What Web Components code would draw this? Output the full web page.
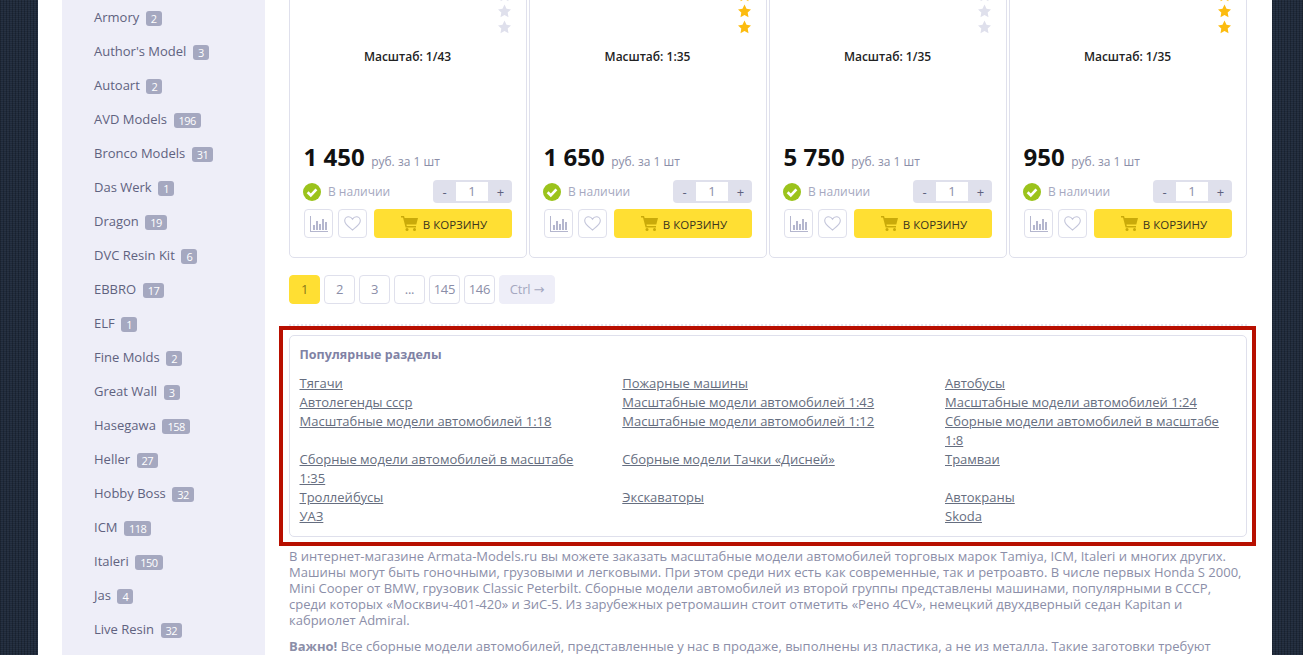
<!DOCTYPE html>
<html lang="ru">
<head>
<meta charset="utf-8">
<title>Armata Models</title>
<style>
  html, body { margin: 0; height: 655px; overflow: hidden; }
  body {
    font-family: "Open Sans", "Liberation Sans", sans-serif;
    background-color: #1f2a3b;
    background-image:
      repeating-linear-gradient(90deg, rgba(0,0,0,.22) 0 1px, transparent 1px 3px),
      repeating-linear-gradient(0deg, rgba(255,255,255,.035) 0 1px, transparent 1px 2px);
  }
  .page { display: flex; width: 1234px; height: 655px; margin-left: 38px; background: #fff; }
</style>
</head>
<body>
<div class="page">
  <brand-sidebar></brand-sidebar>
  <main-column></main-column>
</div>

<script>
const brands = [
  ['Armory', 2], ["Author's Model", 3], ['Autoart', 2], ['AVD Models', 196], ['Bronco Models', 31],
  ['Das Werk', 1], ['Dragon', 19], ['DVC Resin Kit', 6], ['EBBRO', 17], ['ELF', 1], ['Fine Molds', 2],
  ['Great Wall', 3], ['Hasegawa', 158], ['Heller', 27], ['Hobby Boss', 32], ['ICM', 118],
  ['Italeri', 150], ['Jas', 4], ['Live Resin', 32],
];

const products = [
  { scale: '1/43', price: '1 450', stars: false },
  { scale: '1:35', price: '1 650', stars: true },
  { scale: '1/35', price: '5 750', stars: false },
  { scale: '1/35', price: '950', stars: true },
];

const popular = [
  'Тягачи', 'Пожарные машины', 'Автобусы',
  'Автолегенды ссср', 'Масштабные модели автомобилей 1:43', 'Масштабные модели автомобилей 1:24',
  'Масштабные модели автомобилей 1:18', 'Масштабные модели автомобилей 1:12', 'Сборные модели автомобилей в масштабе 1:8',
  'Сборные модели автомобилей в масштабе 1:35', 'Сборные модели Тачки «Дисней»', 'Трамваи',
  'Троллейбусы', 'Экскаваторы', 'Автокраны',
  'УАЗ', '', 'Skoda',
];

const starPath = 'M6.5 .5l2 4.3 4.5.6-3.3 3.2.8 4.7-4-2.3-4 2.3.8-4.7L0 5.400l4.5-.6z';

class BrandSidebar extends HTMLElement {
  constructor() {
    super();
    this.attachShadow({ mode: 'open' });
    this.shadowRoot.innerHTML = `
      <style>
        :host { display: block; flex: none; width: 203px; margin-left: 24px; background: #eeeef8; overflow: hidden; }
        ul { list-style: none; margin: 0; padding: 0 0 0 32px; }
        li { display: flex; align-items: center; height: 34px; font-size: 13px; color: #5f627f; white-space: nowrap; }
        span {
          margin-left: 6.5px; min-width: 6px; height: 15px; padding: 0 5px; margin-top: 2px;
          border-radius: 3px; background: #a5a8c0; color: #fff;
          font-size: 11px; letter-spacing: -.5px; line-height: 15px; text-align: center;
        }
      </style>
      <ul>
        ${brands.map(b => `<li>${b[0]}<span>${b[1]}</span></li>`).join('')}
      </ul>
    `;
  }
}

class ProductCard extends HTMLElement {
  static get observedAttributes() {
    return ['data-scale', 'data-price', 'data-stars'];
  }

  attributeChangedCallback() {
    this.render();
  }

  constructor() {
    super();
    this.attachShadow({ mode: 'open' });
  }

  render() {
    const starColor = this.dataset.stars === 'on' ? '#fcbc10' : '#dfe0ec';
    const star = `<svg width="13" height="14" viewBox="0 0 13 14"><path fill="${starColor}" d="${starPath}"/></svg>`;
    this.shadowRoot.innerHTML = `
      <style>
        :host {
          display: flex; flex-direction: column; box-sizing: border-box; height: 272px;
          padding: 1px 14px 19px; border: 1px solid #dfe0ec; border-radius: 5px; background: #fff;
        }
        .stars { display: flex; flex-direction: column; gap: 2px; align-self: flex-end; margin-right: 1px; }
        svg { display: block; flex: none; }
        .scale { margin-top: 14px; padding-right: 1px; font-size: 12px; font-weight: 600; line-height: 18px; color: #222; text-align: center; }
        .price { display: flex; align-items: baseline; margin: auto 0 0 -.5px; height: 30px; line-height: 28px; }
        .price b { font-size: 24px; font-weight: 700; color: #111; }
        .price span { margin-left: 6.500px; font-size: 12px; color: #8b8ea8; }
        .status { display: flex; align-items: center; height: 23px; margin: 7px 0 0 -1px; font-size: 12px; color: #a5a8c0; }
        .status span { margin-left: 7px; }
        .qty {
          display: flex; align-items: center; width: 79px; height: 23px; margin-left: auto;
          border-radius: 4px; background: #dfe0ec; color: #5f627f; font-size: 13px;
        }
        .qty i { flex: 1; font-style: normal; text-align: center; }
        .qty em { width: 32px; height: 19px; margin-right: 1px; background: #fff; color: #8b8ea8; font-style: normal; line-height: 19px; text-align: center; }
        .actions { display: flex; margin-top: 6px; }
        .icon {
          display: flex; align-items: center; justify-content: center; box-sizing: border-box;
          width: 29px; height: 29px; margin-right: 5px; border: 1px solid #dfe0ec; border-radius: 4px;
        }
        .icon + .icon { margin-right: 7px; }
        .buy {
          flex: 1; display: flex; align-items: center; justify-content: center;
          border-radius: 4px; background: #ffdf33; color: #3a3520; font-size: 11.5px;
        }
        .buy svg { margin-left: 2px; }
        .buy span { margin: 2px 0 0 5px; }
      </style>
      <div class="stars">${star}${star}${star}</div>
      <div class="scale">Масштаб: ${this.dataset.scale}</div>
      <div class="price"><b>${this.dataset.price}</b><span>руб. за 1 шт</span></div>
      <div class="status">
        <svg width="18" height="18" viewBox="0 0 18 18"><circle cx="9" cy="9" r="9" fill="#9bc31c"/><path fill="none" stroke="#fff" stroke-width="2.6" d="M4.6 9.2l3.2 3.1 5.6-6"/></svg>
        <span>В наличии</span>
        <div class="qty"><i>-</i><em>1</em><i>+</i></div>
      </div>
      <div class="actions">
        <div class="icon">
          <svg width="18" height="16" viewBox="0 0 18 16" fill="#b4b6ce"><rect x="0" y="0" width="1" height="15"/><rect x="0" y="15" width="18" height="1"/><rect x="3" y="9" width="2" height="5"/><rect x="6" y="5" width="2" height="9"/><rect x="9" y="8" width="2" height="6"/><rect x="12" y="3" width="2" height="11"/><rect x="15" y="6" width="2" height="8"/></svg>
        </div>
        <div class="icon">
          <svg width="17" height="15" viewBox="0 0 17 15"><path fill="none" stroke="#c3c5da" stroke-width="1.1" d="M8.5 14C5 11 .7 8.300 .7 4.700 .7 2.400 2.500 .7 4.600 .7c1.600 0 3 .9 3.900 2.500C9.400 1.600 10.800 .7 12.400 .7c2.100 0 3.900 1.700 3.900 4 0 3.600-4.300 6.300-7.800 9.300z"/></svg>
        </div>
        <div class="buy">
          <svg width="17" height="15" viewBox="0 0 17 15" fill="#c9aa0a"><path d="M0 0h3l.6 2H17l-1.700 6.500H5.400l.4 1.500H15v1.400H4.600L2 1.400H0z"/><circle cx="6" cy="13.400" r="1.500"/><circle cx="13.500" cy="13.400" r="1.500"/></svg>
          <span>В КОРЗИНУ</span>
        </div>
      </div>
    `;
  }
}

class PageNav extends HTMLElement {
  constructor() {
    super();
    this.attachShadow({ mode: 'open' });
    this.shadowRoot.innerHTML = `
      <style>
        :host { display: flex; gap: 4px; margin-top: 17px; font-size: 13px; color: #8b8ea8; }
        a {
          box-sizing: border-box; width: 31px; height: 29px; line-height: 27px; text-align: center;
          border: 1px solid #dfe0ec; border-radius: 4px; letter-spacing: -.2px;
        }
        .on { border-color: #ffdf33; background: #ffdf33; color: #8a7a1a; }
        .next { width: 56px; border-color: #eeeef8; background: #eeeef8; color: #a5a8c0; white-space: nowrap; }
        .next span { font-family: "DejaVu Sans", sans-serif; }
      </style>
      <a class="on">1</a><a>2</a><a>3</a><a>...</a><a>145</a><a>146</a><a class="next">Ctrl <span>→</span></a>
    `;
  }
}

class PopularSections extends HTMLElement {
  constructor() {
    super();
    this.attachShadow({ mode: 'open' });
    this.shadowRoot.innerHTML = `
      <style>
        :host {
          display: block; box-sizing: border-box; width: 977px; height: 220px; margin: 0 0 0 -10px;
          padding: 5px 5px 5px 6px; border: 4px solid #b80f00;
        }
        .box { box-sizing: border-box; height: 202px; padding: 9px 9px 0 9.500px; border: 1px solid #dfe0ec; border-radius: 5px; }
        h3 { margin: 0 0 9px; font-size: 12.5px; font-weight: 700; line-height: 20px; color: #8082a5; }
        .grid { display: grid; grid-template-columns: repeat(3, 322.750px); }
        a { display: block; padding-right: 30px; font-size: 13px; line-height: 19px; color: #666e80; text-decoration: underline; }
      </style>
      <div class="box">
        <h3>Популярные разделы</h3>
        <div class="grid">${popular.map(p => `<a>${p}</a>`).join('')}</div>
      </div>
    `;
  }
}

class MainColumn extends HTMLElement {
  constructor() {
    super();
    this.attachShadow({ mode: 'open' });
    this.shadowRoot.innerHTML = `
      <style>
        :host { display: block; flex: none; width: 958px; margin: -14px 0 0 24px; }
        .cards { display: grid; grid-template-columns: repeat(4, 238px); gap: 2px; }
        hr { height: 0; margin: 20px 0 0; border: 0; border-top: 2px dotted #e6e6f0; }
        p { margin: 0 0 10px; font-size: 13px; line-height: 16px; color: #8b8ea8; }
        .text { margin-top: 2px; }
        b { font-weight: 700; }
      </style>
      <div class="cards">
        ${products.map(p => `<product-card data-scale="${p.scale}" data-price="${p.price}" data-stars="${p.stars ? 'on' : 'off'}"></product-card>`).join('')}
      </div>
      <page-nav></page-nav>
      <hr>
      <popular-sections></popular-sections>
      <div class="text">
        <p>В интернет-магазине Armata-Models.ru вы можете заказать масштабные модели автомобилей торговых марок Tamiya, ICM, Italeri и многих других. Машины могут быть гоночными, грузовыми и легковыми. При этом среди них есть как современные, так и ретроавто. В числе первых Honda S 2000, Mini Cooper от BMW, грузовик Classic Peterbilt. Сборные модели автомобилей из второй группы представлены машинами, популярными в СССР, среди которых «Москвич-401-420» и ЗиС-5. Из зарубежных ретромашин стоит отметить «Рено 4CV», немецкий двухдверный седан Kapitan и кабриолет Admiral.</p>
        <p><b>Важно!</b> Все сборные модели автомобилей, представленные у нас в продаже, выполнены из пластика, а не из металла. Такие заготовки требуют</p>
      </div>
    `;
  }
}

customElements.define('brand-sidebar', BrandSidebar);
customElements.define('product-card', ProductCard);
customElements.define('page-nav', PageNav);
customElements.define('popular-sections', PopularSections);
customElements.define('main-column', MainColumn);
</script>
</body>
</html>
